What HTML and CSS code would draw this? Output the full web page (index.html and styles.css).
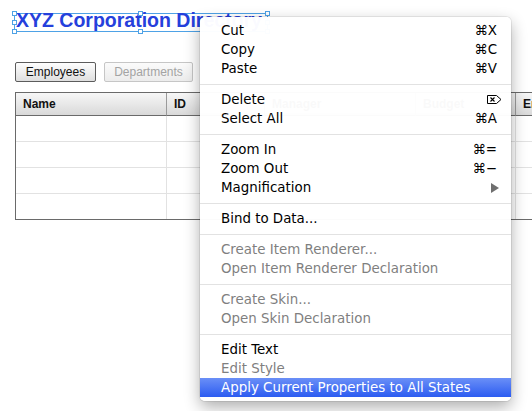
FILE: index.html
```html
<!DOCTYPE html>
<html>
<head>
<meta charset="utf-8">
<link rel="stylesheet" href="styles.css">
</head>
<body>
<div class="page">
  <div class="title-box">
    <span class="title">XYZ Corporation Directory</span>
    <i class="handle h-tl"></i><i class="handle h-tm"></i><i class="handle h-tr"></i>
    <i class="handle h-ml"></i><i class="handle h-mr"></i>
    <i class="handle h-bl"></i><i class="handle h-bm"></i><i class="handle h-br"></i>
  </div>

  <div class="tabs">
    <button class="btn btn-emp">Employees</button>
    <button class="btn btn-dep btn-disabled">Departments</button>
  </div>

  <div class="grid">
    <div class="hcell">Name</div>
    <div class="hcell">ID</div>
    <div class="hcell">Manager</div>
    <div class="hcell">Budget</div>
    <div class="hcell">Email</div>

    <div class="cell"></div><div class="cell"></div><div class="cell"></div><div class="cell"></div><div class="cell"></div>
    <div class="cell"></div><div class="cell"></div><div class="cell"></div><div class="cell"></div><div class="cell"></div>
    <div class="cell"></div><div class="cell"></div><div class="cell"></div><div class="cell"></div><div class="cell"></div>
    <div class="cell last"></div><div class="cell last"></div><div class="cell last"></div><div class="cell last"></div><div class="cell last"></div>
  </div>

  <div class="menu">
    <div class="item"><span>Cut</span><span class="key">⌘X</span></div>
    <div class="item"><span>Copy</span><span class="key">⌘C</span></div>
    <div class="item"><span>Paste</span><span class="key">⌘V</span></div>
    <div class="sep"></div>
    <div class="item"><span>Delete</span>
      <svg class="del-icon" width="15" height="9" viewBox="0 0 15 9"><path d="M0.5 0.5H9.5L14 4.5L9.5 8.5H0.5Z" fill="none" stroke="#000" stroke-width="1"/><path d="M3.5 2.5L7.5 6.5M7.5 2.5L3.5 6.5" stroke="#000" stroke-width="1.1"/></svg>
    </div>
    <div class="item"><span>Select All</span><span class="key">⌘A</span></div>
    <div class="sep"></div>
    <div class="item"><span>Zoom In</span><span class="key">⌘=</span></div>
    <div class="item"><span>Zoom Out</span><span class="key">⌘−</span></div>
    <div class="item"><span>Magnification</span>
      <svg class="sub-icon" width="8" height="10" viewBox="0 0 8 10"><polygon points="0,0 8,5 0,10" fill="#6f6f6f"/></svg>
    </div>
    <div class="sep"></div>
    <div class="item"><span>Bind to Data...</span></div>
    <div class="sep"></div>
    <div class="item disabled"><span>Create Item Renderer...</span></div>
    <div class="item disabled"><span>Open Item Renderer Declaration</span></div>
    <div class="sep"></div>
    <div class="item disabled"><span>Create Skin...</span></div>
    <div class="item disabled"><span>Open Skin Declaration</span></div>
    <div class="sep"></div>
    <div class="item"><span>Edit Text</span></div>
    <div class="item disabled"><span>Edit Style</span></div>
    <div class="item selected"><span>Apply Current Properties to All States</span></div>
  </div>
</div>
</body>
</html>
```

FILE: styles.css
```css
html, body {
  margin: 0;
  padding: 0;
  overflow: hidden;
  background: #fff;
}

.page {
  position: relative;
  width: 532px;
  height: 411px;
  overflow: hidden;
  font-family: "Liberation Sans", Arial, sans-serif;
  padding-top: 13px;
  box-sizing: border-box;
}

/* Title with selection box */
.title-box {
  position: relative;
  box-sizing: border-box;
  width: 254px;
  height: 19px;
  margin-left: 14px;
  border: 1px solid #4ea2e6;
  padding-left: 1px;
}

.title {
  display: block;
  font-weight: bold;
  font-size: 19.5px;
  line-height: 13px;
  color: #2540dc;
  white-space: nowrap;
}

.handle {
  position: absolute;
  width: 5px;
  height: 5px;
  box-sizing: border-box;
  border: 1px solid #4ea2e6;
  background: #fff;
}
.h-tl { left: -3px; top: -3px; }
.h-tm { left: calc(50% - 3px); top: -3px; }
.h-tr { right: -3px; top: -3px; }
.h-ml { left: -3px; top: calc(50% - 3px); }
.h-mr { right: -3px; top: calc(50% - 3px); }
.h-bl { left: -3px; bottom: -3px; }
.h-bm { left: calc(50% - 3px); bottom: -3px; }
.h-br { right: -3px; bottom: -3px; }

/* Buttons */
.tabs {
  display: flex;
  gap: 8px;
  margin: 30px 0 0 15px;
}

.btn {
  box-sizing: border-box;
  height: 20px;
  padding: 0;
  margin: 0;
  font-family: "Liberation Sans", Arial, sans-serif;
  font-size: 12px;
  color: #111;
  background: linear-gradient(#fefefe, #dedede);
  border: 1px solid #5c5c5c;
  border-radius: 2px;
}
.btn-emp { width: 81px; }
.btn-dep { width: 89px; }
.btn-disabled {
  color: #a3a3a3;
  border-color: #c6c6c6;
  background: linear-gradient(#fbfbfb, #ececec);
}

/* Data grid */
.grid {
  display: grid;
  grid-template-columns: 151px 98px 151px 100px 120px;
  width: max-content;
  margin: 10px 0 0 15px;
  border: 1px solid #6a6a6a;
}

.hcell {
  box-sizing: border-box;
  height: 23px;
  padding-left: 7px;
  line-height: 22px;
  font-size: 12px;
  font-weight: bold;
  color: #111;
  background: linear-gradient(#f7f7f7, #d9d9d9);
  border-right: 1px solid #9a9a9a;
  border-bottom: 1px solid #6a6a6a;
}

.cell {
  box-sizing: border-box;
  height: 26px;
  border-right: 1px solid #e2e2e2;
  border-bottom: 1px solid #e2e2e2;
}
.cell.last {
  height: 25px;
  border-bottom: none;
}

/* Context menu */
.menu {
  position: absolute;
  left: 200px;
  top: 17px;
  width: 311px;
  box-sizing: border-box;
  padding: 4px 0;
  background: rgba(255, 255, 255, 0.975);
  border-radius: 5px;
  box-shadow: 0 0 0 1px rgba(0, 0, 0, 0.07), 0 6px 16px rgba(0, 0, 0, 0.32);
  font-family: "DejaVu Sans", "Liberation Sans", sans-serif;
  font-size: 13.4px;
  color: #000;
}

.item {
  display: flex;
  justify-content: space-between;
  align-items: center;
  height: 19px;
  line-height: 19px;
  padding: 0 14px 0 21px;
  white-space: nowrap;
}

.item.disabled {
  color: #7f7f7f;
}

.item.selected {
  color: #fff;
  background: linear-gradient(#6a8ff7, #2c5cf1);
}

.key {
  font-size: 13.4px;
}

.del-icon {
  margin-right: -5px;
}

.sub-icon {
  margin-right: -2px;
}

.sep {
  height: 1px;
  margin: 6px 0 5px;
  background: #e2e2e2;
}
```
